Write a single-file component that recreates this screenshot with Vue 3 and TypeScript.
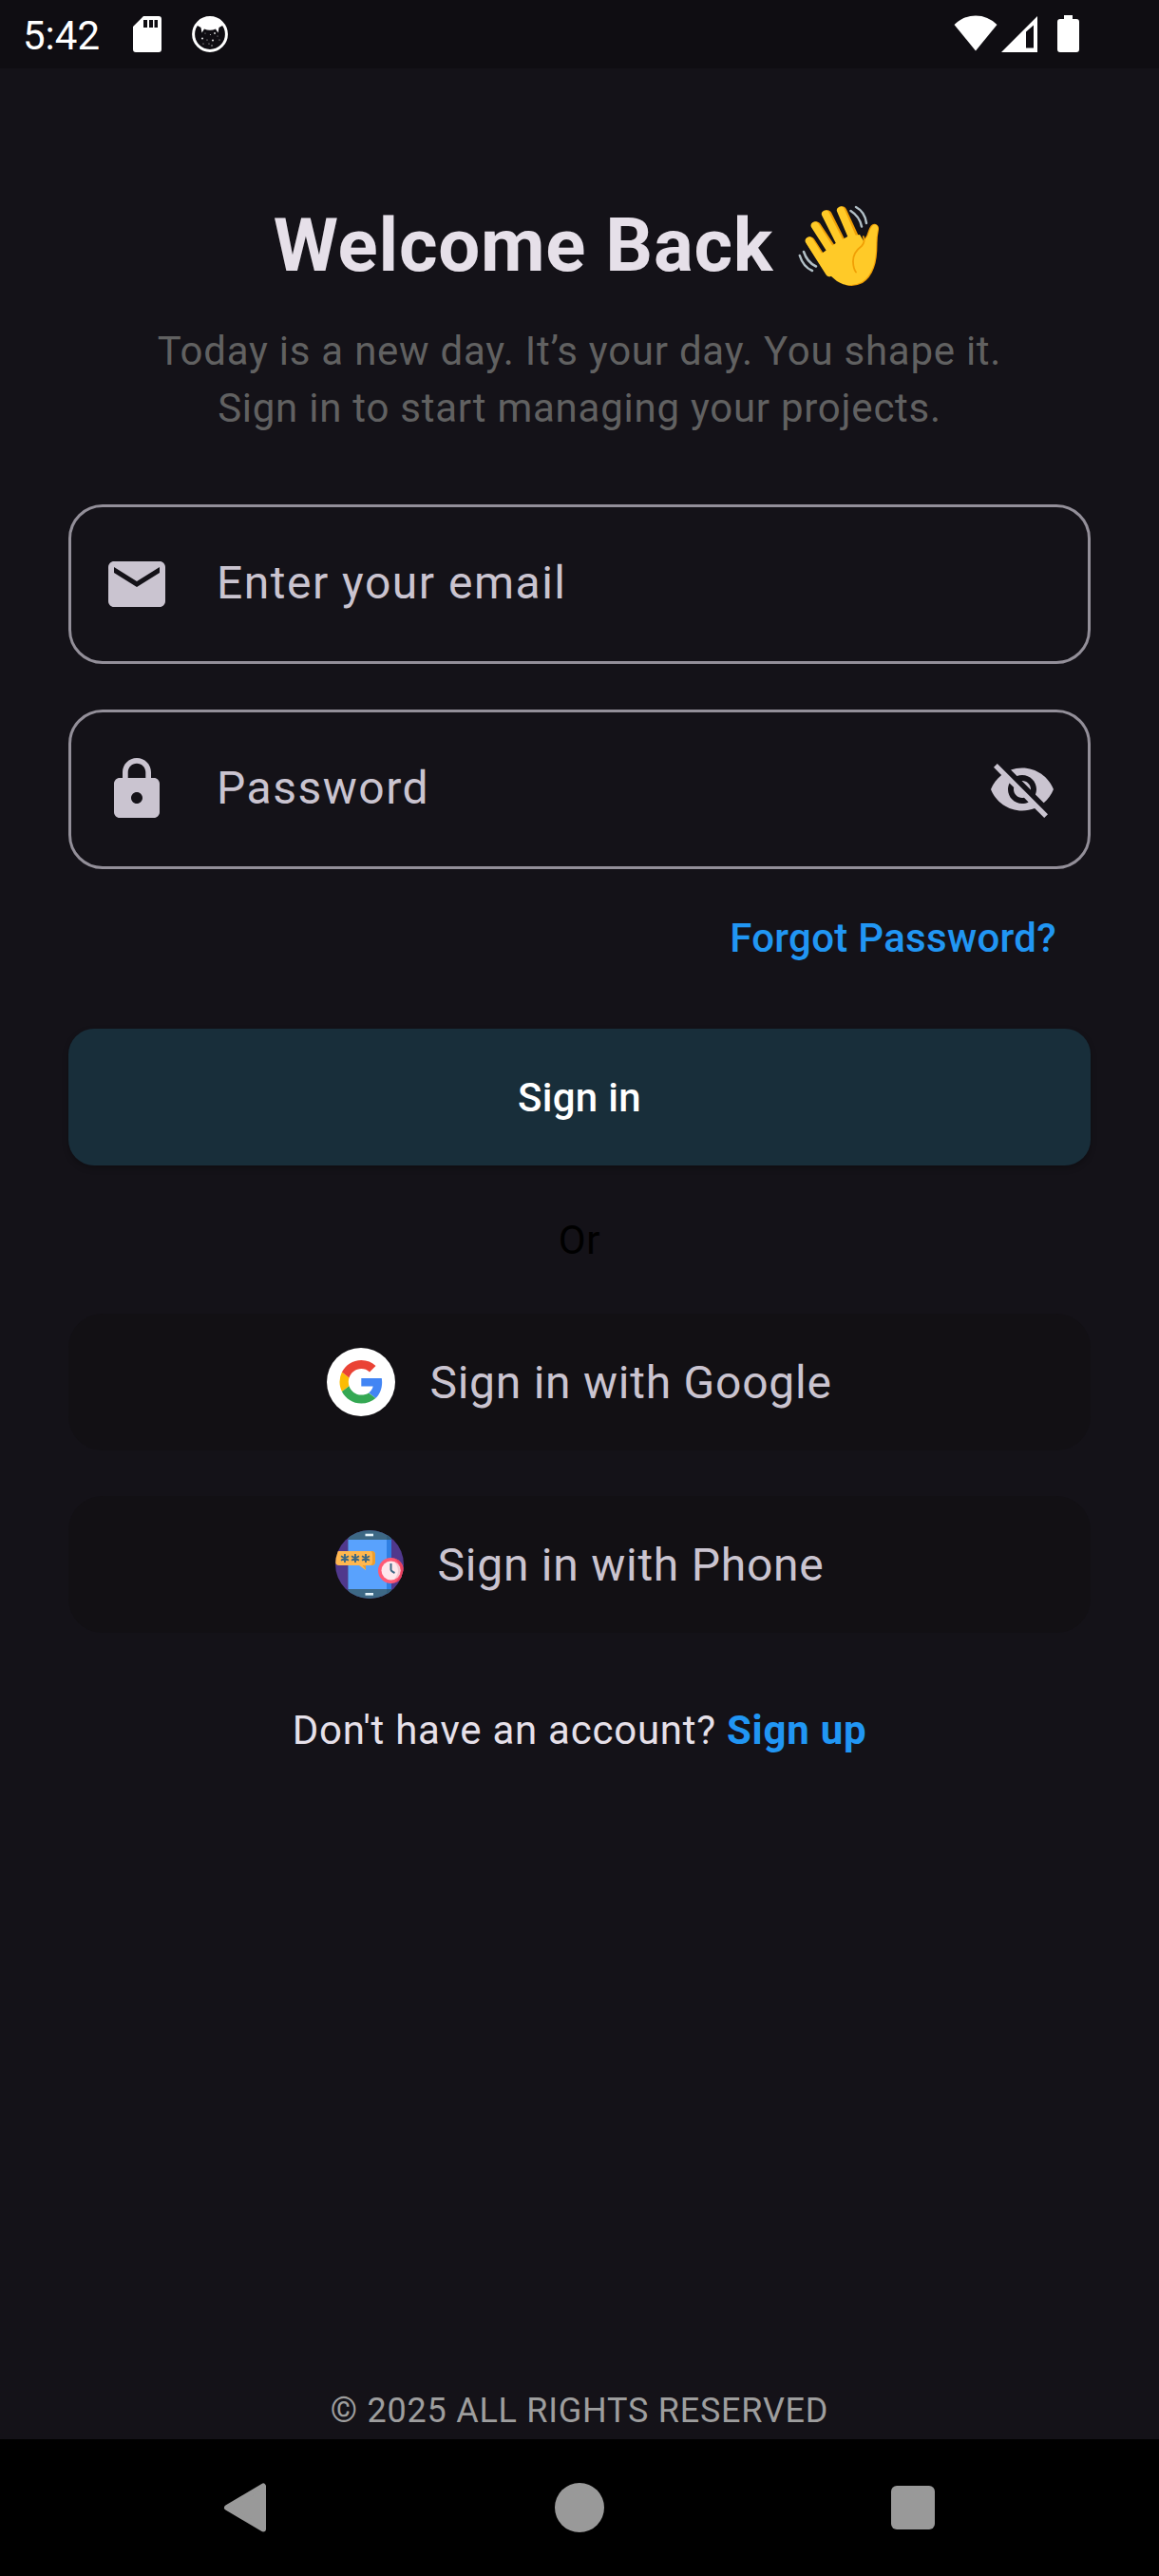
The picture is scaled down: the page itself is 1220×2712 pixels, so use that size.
<script setup lang="ts">
interface SocialOption {
  id: 'google' | 'phone'
  label: string
}

const socialOptions: SocialOption[] = [
  { id: 'google', label: 'Sign in with Google' },
  { id: 'phone', label: 'Sign in with Phone' },
]
</script>

<template>
  <div class="screen">
    <header class="status">
      <span class="clock">5:42</span>
      <svg class="sd" width="30" height="38" viewBox="0 0 30 38">
        <path fill="#fff" fill-rule="evenodd" d="M11 0H27Q30 0 30 3V35Q30 38 27 38H3Q0 38 0 35V11ZM11 4v8h4V4ZM17 4v8h4V4ZM22.500 4v8h3.500V4Z" />
      </svg>
      <svg class="cat" width="38" height="38" viewBox="0 0 38 38">
        <circle cx="19" cy="19" r="17.400" fill="none" stroke="#fff" stroke-width="3" />
        <path fill="#fff" d="M5 9.500Q10 2 19 2T33 9.500L28.500 12L27.500 17.500L25 13.500Q19 16 13 13.500L10.500 17.500L9.500 12Z" />
        <g fill="#ccc">
          <circle cx="11" cy="23.500" r="1.100" /><circle cx="22" cy="25.500" r="1.100" /><circle cx="24" cy="18" r="1" />
          <circle cx="19.500" cy="19.500" r=".6" /><circle cx="16" cy="25" r=".6" /><circle cx="29" cy="25" r=".6" />
          <circle cx="27" cy="21" r=".5" /><circle cx="18" cy="29" r=".6" /><circle cx="12" cy="29" r=".6" />
          <circle cx="21" cy="31" r=".7" /><circle cx="14" cy="18" r=".5" />
        </g>
      </svg>
      <span class="grow"></span>
      <svg class="wifi" width="46" height="38" viewBox="0 0 46 38">
        <path fill="#fff" d="M0.500 10Q10 .5 23 .5T45.500 10L23 37.500Z" />
      </svg>
      <svg class="signal" width="38" height="38" viewBox="0 0 38 38">
        <path fill="#fff" fill-rule="evenodd" d="M38 0V38H0ZM34 9.500L26 16.500V33.500H34Z" />
      </svg>
      <svg class="battery" width="23" height="39" viewBox="0 0 23 39">
        <path fill="#fff" d="M7 0H16V4H20Q23 4 23 7V36Q23 39 20 39H3Q0 39 0 36V7Q0 4 3 4H7Z" />
      </svg>
    </header>

    <main class="content">
      <h1 class="title">
        <span>Welcome Back</span>
        <svg class="wave" width="88" height="88" viewBox="0 0 88 88" role="img" aria-label="Waving hand">
          <g fill="none" stroke="#f19f05" stroke-width="9.400" stroke-linecap="round">
            <path d="M47.500 7L65 45M32 11L54 55M20.500 23L45 60M14 39L34 70" />
          </g>
          <path fill="#f19f05" d="M70 38Q74 33 75 28Q78 19 83 21Q87 23 85.800 28Q84.500 34 84.500 41Q84.500 58 81 67Q77 78 69 83Q60 87.500 51 85L70 60Z" />
          <g fill="none" stroke="#ffca28" stroke-width="8.200" stroke-linecap="round">
            <path d="M46 6.500L62 44M30 10.500L54 58M18.800 22.500L46 65M12.800 38.500L34 72" />
          </g>
          <path fill="#ffca28" d="M30 49L40.700 41L53.200 34L66 32L70 38.500Q75 34 76 29Q79 20.500 82.500 21.500Q86 22.500 84.800 28Q83.300 35 83.300 42Q83 58 80 66Q76 77 68 82Q54 89 42 81Q34 75 28.500 68L21 55Z" />
          <path fill="none" stroke="#f19f05" stroke-width="1.800" stroke-linecap="round" d="M69.800 34Q72 40 68 44Q58.500 51 59 61Q59.300 68 62 71.500" />
          <g fill="none" stroke="#b0bec5" stroke-width="2.500" stroke-linecap="round">
            <path d="M62 3Q71.500 8 73 20M56.500 7Q66 13 68 23.500M7 50Q10.500 61 20 65.500M2.800 54Q6.500 66 16 70" />
          </g>
        </svg>
      </h1>
      <p class="subtitle">Today is a new day. It’s your day. You shape it.<br />Sign in to start managing your projects.</p>

      <form class="form" @submit.prevent>
        <label class="field">
          <svg width="72" height="72" viewBox="0 0 24 24" fill="#cac4d0">
            <path d="M20 4H4c-1.100 0-1.990.9-1.990 2L2 18c0 1.100.9 2 2 2h16c1.100 0 2-.9 2-2V6c0-1.100-.9-2-2-2zm0 4l-8 5-8-5V6l8 5 8-5v2z" />
          </svg>
          <span class="placeholder">Enter your email</span>
        </label>
        <label class="field">
          <svg width="72" height="72" viewBox="0 0 24 24" fill="#cac4d0">
            <path d="M18 8h-1V6c0-2.760-2.240-5-5-5S7 3.240 7 6v2H6c-1.100 0-2 .9-2 2v10c0 1.100.9 2 2 2h12c1.100 0 2-.9 2-2V10c0-1.100-.9-2-2-2zm-6 9c-1.100 0-2-.9-2-2s.9-2 2-2 2 .9 2 2-.9 2-2 2zm3.100-9H8.900V6c0-1.710 1.390-3.100 3.100-3.100 1.710 0 3.100 1.390 3.100 3.100v2z" />
          </svg>
          <span class="placeholder">Password</span>
          <svg width="72" height="72" viewBox="0 0 24 24" fill="#cac4d0">
            <path d="M12 7c2.760 0 5 2.240 5 5 0 .65-.13 1.260-.36 1.830l2.920 2.920c1.510-1.260 2.700-2.890 3.430-4.750-1.730-4.390-6-7.500-11-7.500-1.400 0-2.740.25-3.980.7l2.160 2.160C10.740 7.130 11.350 7 12 7zM2 4.270l2.280 2.280.46.46C3.080 8.300 1.780 10.020 1 12c1.730 4.390 6 7.500 11 7.500 1.550 0 3.030-.3 4.380-.84l.42.42L19.730 22 21 20.730 3.270 3 2 4.270zM7.530 9.800l1.550 1.550c-.05.21-.08.43-.08.65 0 1.660 1.340 3 3 3 .22 0 .44-.03.65-.08l1.550 1.550c-.67.33-1.410.53-2.200.53-2.760 0-5-2.240-5-5 0-.79.2-1.530.53-2.200zm4.310-.78l3.150 3.150.02-.16c0-1.660-1.340-3-3-3l-.17.01z" />
          </svg>
        </label>
        <a class="forgot">Forgot Password?</a>
        <button class="primary" type="submit">Sign in</button>
      </form>

      <p class="or">Or</p>

      <div class="socials">
        <button v-for="option in socialOptions" :key="option.id" class="social" type="button">
          <svg v-if="option.id === 'google'" width="72" height="72" viewBox="0 0 72 72">
            <circle cx="36" cy="36" r="36" fill="#fff" />
            <g transform="translate(13.500 13) scale(.95)">
              <path fill="#4285f4" d="M47 24.550c0-1.600-.15-3.150-.4-4.650H24v9.100h13c-.58 2.960-2.260 5.480-4.780 7.180l7.730 6C44.460 38 47 31.900 47 24.550z" />
              <path fill="#fbbc05" d="M10.530 28.590A14.500 14.500 0 0 1 9.770 24c0-1.600.27-3.140.76-4.590l-7.980-6.190A23.940 23.940 0 0 0 0 24c0 3.870.92 7.540 2.560 10.780l7.970-6.190z" />
              <path fill="#ea4335" d="M24 9.500c3.540 0 6.710 1.220 9.210 3.600l6.850-6.850C35.900 2.380 30.470 0 24 0 14.620 0 6.510 5.380 2.560 13.220l7.980 6.190C12.430 13.720 17.740 9.500 24 9.500z" />
              <path fill="#34a853" d="M24 48c6.480 0 11.930-2.130 15.890-5.810l-7.730-6c-2.150 1.450-4.920 2.300-8.160 2.300-6.260 0-11.570-4.220-13.470-9.910l-7.980 6.190C6.510 42.620 14.620 48 24 48z" />
            </g>
          </svg>
          <svg v-else width="72" height="72" viewBox="0 0 72 72">
            <defs><clipPath id="badge"><circle cx="36" cy="36" r="36" /></clipPath></defs>
            <g clip-path="url(#badge)">
              <rect width="72" height="72" fill="#50388c" />
              <rect x="13.500" width="45.500" height="72" fill="#3d6885" />
              <rect x="54" width="5" height="72" fill="#335e7c" />
              <rect x="13.500" y="10" width="45.500" height="52" fill="#59a2fd" />
              <rect x="54" y="10" width="5" height="52" fill="#2f7fe2" />
              <rect x="31.500" y="3.700" width="8.500" height="2.600" fill="#e5f4fb" />
              <rect x="31.500" y="66" width="8.500" height="2.600" fill="#e5f4fb" />
              <path fill="#ffb74f" d="M4 22H38Q42 22 42 26V33Q42 37 38 37H32V42L25 37H4Q0 37 0 33V26Q0 22 4 22Z" />
              <path fill="#ec9d2e" d="M37.500 22H38Q42 22 42 26V33Q42 37 38 37H32V41.500L28.500 37H36Q39 37 39 33V26Q39 23 37.500 22Z" />
              <g fill="none" stroke="#3d6885" stroke-width="1.900">
                <path d="M10 25v9M6 27.200l8 4.600M14 27.200l-8 4.600M21 25v9M17 27.200l8 4.600M25 27.200l-8 4.600M32 25v9M28 27.200l8 4.600M36 27.200l-8 4.600" />
              </g>
              <circle cx="58.500" cy="42.500" r="13.500" fill="#ff5a75" />
              <path d="M62 29.500A13.500 13.500 0 0 1 62 55.500Q69 50 69 42.500T62 29.500Z" fill="#e8415f" />
              <circle cx="58.500" cy="42.500" r="10" fill="#ffe7ec" />
              <path d="M62 33.200A10 10 0 0 1 62 51.800Q66 47 66 42.500T62 33.200Z" fill="#f1c9d2" />
              <path d="M58.500 35v6.500q0 1.500 4 3.500" fill="none" stroke="#3d6885" stroke-width="2" />
            </g>
          </svg>
          <span>{{ option.label }}</span>
        </button>
      </div>

      <p class="signup">Don't have an account? <a>Sign up</a></p>
      <footer class="copyright">© 2025 ALL RIGHTS RESERVED</footer>
    </main>

    <nav class="navbar">
      <svg width="52" height="52" viewBox="0 0 52 52"><path d="M45 3.500V48.500L7 26Z" transform="translate(-1 0)" fill="#999" stroke="#999" stroke-width="6" stroke-linejoin="round" /></svg>
      <svg width="52" height="52" viewBox="0 0 52 52"><circle cx="26" cy="26" r="26" fill="#999" /></svg>
      <svg width="52" height="52" viewBox="0 0 52 52"><rect x="3" y="3" width="46" height="46" rx="6" fill="#999" /></svg>
    </nav>
  </div>
</template>

<style>
body {
  background: #141218;
}
</style>

<style scoped>
.screen {
  display: flex;
  flex-direction: column;
  width: 1220px;
  height: 2712px;
  background: #141218;
  font-family: Roboto, "Liberation Sans", sans-serif;
  color: #e6e0e9;
  overflow: hidden;
}
.screen svg {
  display: block;
  flex: none;
}
h1,
p {
  margin: 0;
}
.status {
  display: flex;
  align-items: flex-start;
  height: 72px;
  padding: 0 84px 0 24px;
  background: #0f0d12;
  box-sizing: border-box;
  color: #fff;
}
.clock {
  width: 116px;
  font-size: 42px;
  line-height: 76px;
}
.sd {
  margin-top: 17px;
}
.cat {
  margin: 17px 0 0 32px;
}
.grow {
  flex: 1;
}
.wifi {
  margin-top: 16px;
}
.signal {
  margin: 17px 0 0 4px;
}
.battery {
  margin: 16px 0 0 21px;
}
.content {
  flex: 1;
  display: flex;
  flex-direction: column;
  padding: 127px 72px 6px;
}
.title {
  display: flex;
  align-items: center;
  justify-content: center;
  height: 120px;
  font-size: 78px;
  line-height: 120px;
  font-weight: 700;
  letter-spacing: 0.75px;
}
.wave {
  margin: 0 5px 0 25px;
}
.subtitle {
  margin-top: 21px;
  font-size: 42px;
  line-height: 60px;
  letter-spacing: 0.75px;
  text-align: center;
  color: #616161;
}
.form {
  display: flex;
  flex-direction: column;
  gap: 48px;
  margin-top: 71px;
}
.field {
  display: flex;
  align-items: center;
  height: 168px;
  padding: 0 33px;
  border: 3px solid #938f99;
  border-radius: 36px;
  box-sizing: border-box;
}
.placeholder {
  flex: 1;
  margin: -2px 0 0 48px;
  font-size: 48px;
  line-height: 72px;
  letter-spacing: 1.5px;
  color: #cac4d0;
}
.forgot {
  align-self: flex-end;
  margin: -5px 36px 17px 0;
  font-size: 42px;
  line-height: 60px;
  font-weight: 500;
  letter-spacing: 0.3px;
  color: #2196f3;
}
.primary {
  height: 144px;
  padding: 2px 0 0;
  border: 0;
  border-radius: 27px;
  background: #182e3a;
  box-shadow: 0 3px 6px rgba(0, 0, 0, 0.25);
  box-sizing: border-box;
  font: 500 42px/60px Roboto, "Liberation Sans", sans-serif;
  letter-spacing: 0.3px;
  color: #fff;
}
.or {
  margin: 49px 0 47px;
  font-size: 42px;
  line-height: 60px;
  letter-spacing: 0.75px;
  text-align: center;
  color: #000;
}
.socials {
  display: flex;
  flex-direction: column;
  gap: 48px;
}
.social {
  display: flex;
  align-items: center;
  justify-content: center;
  gap: 36px;
  height: 144px;
  padding: 0;
  border: 0;
  border-radius: 36px;
  background: #121014;
  font: 400 48px/72px Roboto, "Liberation Sans", sans-serif;
  letter-spacing: 0.75px;
  color: #cac4d0;
}
.social span {
  margin-top: 2px;
}
.signup {
  margin-top: 73px;
  font-size: 42px;
  line-height: 60px;
  letter-spacing: 0.75px;
  text-align: center;
}
.signup a {
  font-weight: 700;
  color: #2196f3;
}
.copyright {
  margin-top: auto;
  font-size: 36px;
  line-height: 48px;
  letter-spacing: 0.75px;
  text-align: center;
  color: #9e9e9e;
}
.navbar {
  display: flex;
  align-items: center;
  justify-content: center;
  gap: 299px;
  height: 144px;
  background: #000;
}
</style>
